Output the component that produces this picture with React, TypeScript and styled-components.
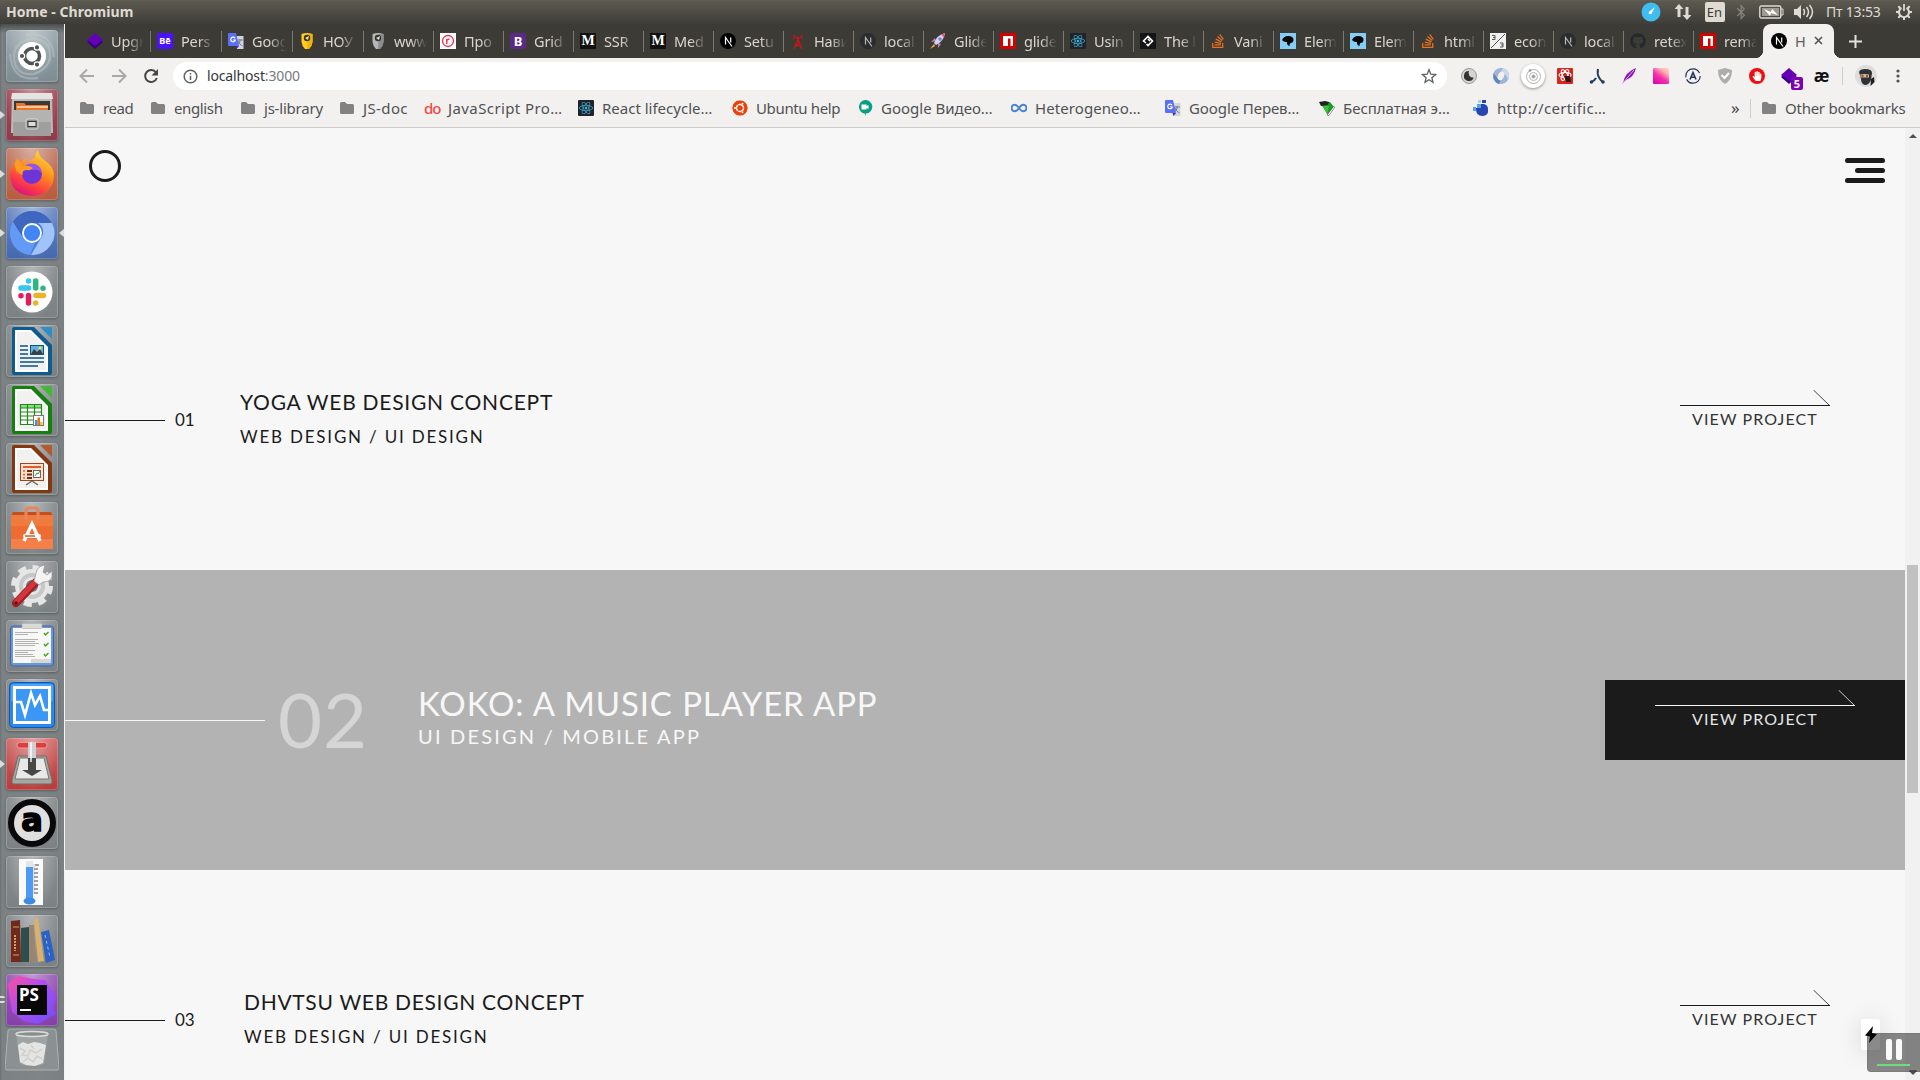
import React from 'react';
import styled, { createGlobalStyle, css } from 'styled-components';
import { FaReact, FaStackOverflow, FaGithub, FaBluetoothB, FaUbuntu, FaHandPaper } from 'react-icons/fa';

const uiFont = '"Noto Sans", "Open Sans", sans-serif';
const pageFont = 'Lato, "Open Sans", sans-serif';

const Global = createGlobalStyle`
  *, *::before, *::after { box-sizing: border-box; }
  body { margin: 0; background: #f7f7f7; overflow: hidden; }
  svg { display: block; flex: none; }
`;

const Desktop = styled.div`
  position: relative;
  display: flex;
  flex-direction: column;
  width: 1920px;
  height: 1080px;
  overflow: hidden;
  font-family: ${uiFont};
`;

/* ---------- system panel ---------- */
const Panel = styled.header`
  display: flex;
  align-items: center;
  flex: none;
  height: 24px;
  padding: 0 8px 0 6px;
  color: #dfdbd2;
  background: linear-gradient(#67644f 0, #5b584f 1px, #5a574f 3px, #3f3e39 23px);
`;
const PanelTitle = styled.div`
  flex: 1;
  font-size: 14px;
  font-weight: 700;
  line-height: 22px;
  letter-spacing: 0.05px;
`;
const Indicators = styled.div`
  display: flex;
  align-items: center;
`;
const Indicator = styled.div<{ $w: number }>`
  display: flex;
  justify-content: center;
  width: ${(p) => p.$w}px;
`;
const Lang = styled.div`
  width: 20px;
  height: 20px;
  border-radius: 2px;
  color: #3c3b37;
  background: #dfdbd2;
  font-size: 13px;
  line-height: 20px;
  text-align: center;
`;
const Clock = styled.div`
  width: 78px;
  padding-left: 8px;
  font-size: 14px;
  line-height: 22px;
  letter-spacing: -0.2px;
  white-space: nowrap;
`;

/* ---------- launcher ---------- */
const Body = styled.div`
  display: flex;
  flex: 1;
  min-height: 0;
`;
const Launcher = styled.nav`
  display: flex;
  flex-direction: column;
  gap: 7px;
  flex: none;
  width: 65px;
  padding: 6px 0 0 6px;
  border-right: 1px solid #f4f4f4;
  background:
    linear-gradient(rgba(30, 32, 33, 0.55), rgba(30, 32, 33, 0) 9px),
    linear-gradient(90deg, #6b7072 0, #7c8284 2px, #808688 60%, #7a8082);
`;
const Tile = styled.div<{ $bg: string; $running?: boolean; $active?: boolean; $pair?: boolean }>`
  position: relative;
  flex: none;
  width: 52px;
  height: 52px;
  border-radius: 4px;
  background: radial-gradient(ellipse at 50% 0, rgba(255, 255, 255, 0.38), rgba(255, 255, 255, 0) 75%), ${(p) => p.$bg};
  box-shadow: inset 0 0 0 1px rgba(255, 255, 255, 0.2), 0 1px 3px rgba(0, 0, 0, 0.3);
  ${(p) => p.$running && css`
    &::before {
      content: '';
      position: absolute;
      left: -6px;
      top: 22px;
      border: 4px solid transparent;
      border-left: 5px solid #dcdcdc;
      border-right: 0;
    }
  `}
  ${(p) => p.$pair && css`
    &::before {
      content: '';
      position: absolute;
      left: -6px;
      top: 22px;
      width: 5px;
      height: 7px;
      border: solid #dcdcdc;
      border-width: 2px 0;
      border-radius: 0 2px 2px 0;
    }
  `}
  ${(p) => p.$active && css`
    &::after {
      content: '';
      position: absolute;
      right: -6px;
      top: 22px;
      border: 4px solid transparent;
      border-right: 5px solid #dcdcdc;
      border-left: 0;
    }
  `}
`;
const TileLetter = styled.div`
  position: absolute;
  inset: 11px 11px 11px 11px;
  padding-left: 2px;
  color: #fff;
  background: #080808;
  font: 700 17px/20px "Noto Sans", sans-serif;
  &::after {
    content: '';
    position: absolute;
    left: 3px;
    bottom: 4px;
    width: 11px;
    height: 2px;
    background: #fff;
  }
`;
const ArchLetter = styled.div`
  position: absolute;
  inset: 0;
  display: flex;
  align-items: center;
  justify-content: center;
  padding-bottom: 7px;
  font: 700 32px/52px "DejaVu Sans", sans-serif;
  -webkit-text-stroke: 1.5px #000;
`;

/* ---------- browser chrome ---------- */
const Browser = styled.main`
  display: flex;
  flex: 1;
  flex-direction: column;
  min-width: 0;
`;
const TabStrip = styled.div`
  display: flex;
  flex: none;
  height: 34px;
  padding-left: 15px;
  background: #3c3b36;
`;
const Tab = styled.div<{ $w: number; $last?: boolean }>`
  display: flex;
  align-items: center;
  gap: 8px;
  flex: none;
  width: ${(p) => p.$w}px;
  height: 21px;
  margin-top: 7px;
  padding: 0 6px 1px;
  border-right: 1px solid ${(p) => (p.$last ? 'transparent' : '#7a7973')};
  &:first-child { padding-left: 7px; }
`;
const TabText = styled.span`
  flex: 1;
  overflow: hidden;
  color: #d9d6ce;
  font-size: 14.5px;
  line-height: 20px;
  letter-spacing: -0.15px;
  white-space: nowrap;
  mask-image: linear-gradient(90deg, #000 50%, transparent 100%);
`;
const ActiveTab = styled.div`
  position: relative;
  display: flex;
  align-items: center;
  gap: 8px;
  flex: none;
  width: 71px;
  margin-left: -1px;
  padding: 0 11px 1px 8px;
  border-radius: 8px 8px 0 0;
  color: #5f6064;
  background: #f2f1f0;
  font-size: 14.5px;
  line-height: 20px;
  &::before, &::after {
    content: '';
    position: absolute;
    bottom: 0;
    width: 8px;
    height: 8px;
  }
  &::before { right: 100%; background: radial-gradient(circle at 0 0, transparent 8px, #f2f1f0 8.5px); }
  &::after { left: 100%; background: radial-gradient(circle at 100% 0, transparent 8px, #f2f1f0 8.5px); }
`;
const ActiveLabel = styled.span`
  flex: 1;
`;
const NewTab = styled.div`
  display: flex;
  align-items: center;
  margin-left: 15px;
`;
const Favicon = styled.span<{ $bg?: string; $fg?: string; $round?: boolean; $size?: number; $serif?: boolean }>`
  display: flex;
  align-items: center;
  justify-content: center;
  flex: none;
  width: 16px;
  height: 16px;
  overflow: hidden;
  border-radius: ${(p) => (p.$round ? '50%' : '1px')};
  color: ${(p) => p.$fg || '#fff'};
  background: ${(p) => p.$bg || 'transparent'};
  font: 700 ${(p) => p.$size || 12}px/16px ${(p) => (p.$serif ? '"Liberation Serif", serif' : uiFont)};
`;
const Toolbar = styled.div`
  display: flex;
  align-items: center;
  flex: none;
  height: 36px;
  padding-left: 13px;
  background: #f2f1f0;
`;
const NavIcons = styled.div`
  display: flex;
  gap: 14px;
  width: 95px;
`;
const Omnibox = styled.div`
  display: flex;
  align-items: center;
  width: 1274px;
  height: 28px;
  padding: 0 10px;
  border-radius: 14px;
  background: #fff;
`;
const Url = styled.div`
  flex: 1;
  padding-left: 9px;
  color: #34363a;
  font-size: 14px;
  line-height: 26px;
  letter-spacing: -0.15px;
  span { color: #77797c; }
`;
const Extensions = styled.div`
  display: flex;
  align-items: center;
  gap: 16px;
  margin-left: 14px;
`;
const ExtSlot = styled.div`
  position: relative;
  display: flex;
  align-items: center;
  justify-content: center;
  width: 16px;
  height: 16px;
`;
const Raised = styled.div`
  display: flex;
  align-items: center;
  justify-content: center;
  flex: none;
  width: 24px;
  height: 24px;
  border-radius: 50%;
  background: #fff;
  box-shadow: 0 1px 3px rgba(0, 0, 0, 0.4);
`;
const Count = styled.span`
  position: absolute;
  left: 10px;
  top: 9px;
  width: 12px;
  height: 13px;
  border-radius: 2px;
  color: #fff;
  background: #8000b8;
  font: 700 11px/13px ${uiFont};
  text-align: center;
`;
const Ligature = styled.span`
  color: #111;
  font: 700 17px/16px ${uiFont};
  letter-spacing: -1px;
`;
const Divider = styled.div`
  width: 1px;
  height: 16px;
  background: #cfcecd;
`;
const Profile = styled.div`
  display: flex;
  align-items: center;
  gap: 19px;
  margin-left: 13px;
`;
const ProfileDivider = styled(Divider)`
  height: 18px;
  margin-right: -7px;
`;
const Bookmarks = styled.div`
  display: flex;
  align-items: center;
  flex: none;
  height: 34px;
  padding: 0 0 5px 14px;
  border-bottom: 1px solid #cbcbca;
  background: #f2f1f0;
`;
const Bookmark = styled.div<{ $w?: number; $track: number }>`
  display: flex;
  align-items: center;
  gap: 8px;
  flex: none;
  width: ${(p) => (p.$w ? p.$w + 'px' : 'auto')};
  color: #505154;
  font-size: 15px;
  line-height: 23px;
  letter-spacing: ${(p) => p.$track}px;
  white-space: nowrap;
`;
const DoMark = styled.span`
  width: 16px;
  color: #f2483f;
  font-size: 15px;
  font-weight: 500;
  letter-spacing: -1px;
`;
const Overflow = styled.div`
  width: 24px;
  margin-left: auto;
  color: #444;
  font-size: 17px;
  line-height: 22px;
`;
const BookmarkDivider = styled(Divider)`
  height: 19px;
  margin: 0 10px 0 -5px;
`;

/* ---------- web page ---------- */
const Viewport = styled.div`
  display: flex;
  flex: 1;
  min-height: 0;
`;
const Page = styled.div`
  flex: 1;
  overflow: hidden;
  background: #f7f7f7;
  color: #1b1b1b;
  font-family: ${pageFont};
`;
const SiteHeader = styled.div`
  display: flex;
  align-items: flex-start;
  justify-content: space-between;
  height: 142px;
  padding: 22px 20px 0 24px;
`;
const Ring = styled.div`
  width: 32px;
  height: 32px;
  border: 3px solid #1b1b1b;
  border-radius: 50%;
`;
const Burger = styled.div`
  display: flex;
  flex-direction: column;
  align-items: flex-end;
  gap: 5px;
  padding-top: 8px;
`;
const BurgerBar = styled.i<{ $w: number }>`
  width: ${(p) => p.$w}px;
  height: 5px;
  border-radius: 2.5px;
  background: #1b1b1b;
`;
const Project = styled.section<{ $hot?: boolean }>`
  display: flex;
  align-items: center;
  height: 300px;
  color: ${(p) => (p.$hot ? '#f7f7f7' : '#1b1b1b')};
  background: ${(p) => (p.$hot ? '#b3b3b3' : 'transparent')};
`;
const Lead = styled.div<{ $hot?: boolean }>`
  width: ${(p) => (p.$hot ? 200 : 100)}px;
  height: 1px;
  margin-top: 1px;
  background: currentColor;
`;
const Index = styled.div<{ $hot?: boolean; $w: number }>`
  width: ${(p) => p.$w}px;
  padding-left: ${(p) => (p.$hot ? 13 : 10)}px;
  padding-bottom: ${(p) => (p.$hot ? 3 : 1)}px;
  font-size: ${(p) => (p.$hot ? 76 : 17)}px;
  line-height: 1;
  letter-spacing: ${(p) => (p.$hot ? 1 : 0)}px;
  opacity: ${(p) => (p.$hot ? 0.5 : 1)};
`;
const Copy = styled.div`
  flex: 1;
`;
const Title = styled.div<{ $hot?: boolean; $track: number }>`
  padding-bottom: ${(p) => (p.$hot ? 1 : 3)}px;
  font-size: ${(p) => (p.$hot ? 33 : 21)}px;
  line-height: 31px;
  letter-spacing: ${(p) => p.$track}px;
`;
const Kind = styled.div<{ $hot?: boolean }>`
  font-size: ${(p) => (p.$hot ? 20 : 17)}px;
  line-height: ${(p) => (p.$hot ? 32 : 34)}px;
  letter-spacing: ${(p) => (p.$hot ? 2.2 : 1.8)}px;
`;
const ViewButton = styled.div<{ $hot?: boolean }>`
  display: flex;
  flex-direction: column;
  align-items: center;
  width: 300px;
  height: 80px;
  padding-top: 10px;
  background: ${(p) => (p.$hot ? '#1b1b1b' : 'transparent')};
  font-size: 16px;
  line-height: 26px;
`;
const ViewLabel = styled.span<{ $hot?: boolean }>`
  color: ${(p) => (p.$hot ? '#e4e4e4' : '#333')};
  letter-spacing: 1.1px;
`;
const ScrollTrack = styled.div`
  display: flex;
  flex-direction: column;
  align-items: center;
  justify-content: space-between;
  width: 15px;
  padding: 6px 0 5px;
  background: #f1f1f1;
`;
const ScrollArrow = styled.i<{ $down?: boolean }>`
  border: 4px solid transparent;
  ${(p) => (p.$down ? 'border-top-color' : 'border-bottom-color')}: #505050;
  ${(p) => (p.$down ? 'border-bottom' : 'border-top')}: 0;
`;
const ScrollThumb = styled.div`
  width: 11px;
  height: 228px;
  margin-top: 149px;
  background: #c1c1c1;
`;

/* ---------- floating widgets ---------- */
const BoltCard = styled.div`
  position: absolute;
  left: 1861px;
  top: 1019px;
  width: 19px;
  height: 31px;
  padding: 7px 0 0 4px;
  border-radius: 2px;
  background: #fff;
  box-shadow: 0 2px 24px rgba(0, 0, 0, 0.14);
`;
const Recorder = styled.div`
  position: absolute;
  left: 1867px;
  top: 1033px;
  display: grid;
  grid-template-columns: 6px 6px;
  gap: 4px;
  align-content: start;
  justify-content: center;
  width: 58px;
  height: 39px;
  padding: 5px 5px 0 0;
  border: 1px solid rgba(0, 0, 0, 0.08);
  border-radius: 4px;
  background: rgba(0, 0, 0, 0.46);
`;
const PauseBar = styled.i`
  height: 21px;
  border-radius: 2px;
  background: #fafafa;
`;
const Progress = styled.i`
  grid-column: 1 / -1;
  justify-self: center;
  width: 33px;
  height: 2px;
  background: #6fdc7c;
`;
const ScrollEnd = styled.i`
  position: absolute;
  left: 1909px;
  top: 1070px;
  border: 4px solid transparent;
  border-top-color: #4a4a4a;
  border-bottom: 0;
`;

/* ---------- drawings ---------- */
const Diamond = () => (
  <svg width="16" height="16" viewBox="0 0 16 16"><path d="M0 9l8-6 8 6-8 7z" fill="#38007a" /><path d="M0 7l8-7 8 7-8 6z" fill="#6200b8" /></svg>
);
const Translate = () => (
  <svg width="16" height="16" viewBox="0 0 16 16">
    <path d="M6 3h9.500v13H9z" fill="#d2d5da" /><path d="M9 7h6M12 6v1.500c0 3-2 4-3 5M10 8c1 3 3 4 4.500 5" stroke="#68788e" strokeWidth="1" fill="none" />
    <path d="M1 0h7l3 13H1a1 1 0 01-1-1V1a1 1 0 011-1z" fill="#5b70f5" /><path d="M7.500 13H11l-2.500 3z" fill="#4220c0" />
    <path d="M7 5.200A2.300 2.300 0 107.300 7H5" stroke="#fff" strokeWidth="1.200" fill="none" />
  </svg>
);
const Bee = ({ gray }: { gray?: boolean }) => (
  <svg width="16" height="16" viewBox="0 0 16 16">
    <path d="M2.500 1Q8-1 13.500 1v8Q13 13 10 16H6Q3 13 2.500 9z" fill={gray ? '#b4b6b8' : '#ffce1f'} />
    <path d="M9 1h4.500v8Q13 13 10 16H8z" fill={gray ? '#8b8d90' : '#f3b307'} />
    <circle cx="8" cy="5" r="3.200" fill="#38351f" /><path d="M6 5l4-2-1 4z" fill={gray ? '#ddd' : '#ffe88a'} />
  </svg>
);
const Rring = () => (
  <svg width="16" height="16" viewBox="0 0 16 16"><rect width="16" height="16" fill="#fff" /><circle cx="8" cy="8" r="5.500" fill="none" stroke="#ef3050" strokeWidth="1.300" /><path d="M6.800 11V6M6.800 7.500Q7.500 6 9.500 6.300" fill="none" stroke="#ef3050" strokeWidth="1.400" /></svg>
);
const Tower = () => (
  <svg width="16" height="16" viewBox="0 0 16 16" fill="none" stroke="#c8171c" strokeWidth="1.200"><path d="M4 16l4-10 4 10M6 11l5 3M7 8l2.500 2-4 3.500" /><path d="M5.800 4.500L3.500 2M10.200 4.500L12.500 2M4.500 6L2.500 5M11.500 6l2-1" /><circle cx="8" cy="5" r="1" fill="#c8171c" /></svg>
);
const Rocket = () => (
  <svg width="16" height="16" viewBox="0 0 16 16"><path d="M6 8l-5 1 4-4zM8 10l0 5 3-4z" fill="#c77cc8" /><path d="M4 10Q7 2 15 0q-1 8-9 12z" fill="#d8d1f0" /><path d="M11 1.500L15 0l-1 4.500z" fill="#ef4f7f" /><circle cx="10" cy="6" r="1.700" fill="#5b8fd6" /><path d="M4 11l-4 5 5-3z" fill="#f2b04a" /></svg>
);
const Npm = () => (
  <svg width="16" height="16" viewBox="0 0 16 16"><path d="M0 0h16v16H0z" fill="#d50000" /><path d="M3 3h10v10h-2.500V5.500H8V13H3z" fill="#fff" /></svg>
);
const ReactMark = () => <Favicon $bg="#20232a" $fg="#40b8dc"><FaReact size={14} /></Favicon>;
const NextMark = ({ dim }: { dim?: boolean }) => (
  <svg width="16" height="16" viewBox="0 0 16 16"><circle cx="8" cy="8" r="8" fill={dim ? '#2b2c2e' : '#000'} /><path d="M5.500 11.500v-7L12 13.500M10.700 4.500v5" stroke={dim ? '#b8b8b8' : '#fff'} strokeWidth="1.200" fill="none" /></svg>
);
const Knot = () => (
  <svg width="16" height="16" viewBox="0 0 16 16"><path d="M0 0h16v16H0z" fill="#151515" /><path d="M6 10L3.500 8 8 3.500 12.500 8 8 12.500 6.500 11M8 6l2 2" stroke="#fff" strokeWidth="1.600" fill="none" /></svg>
);
const Crow = () => (
  <svg width="16" height="16" viewBox="0 0 16 16"><path d="M0 0h16v16H0z" fill="#85cdf5" /><path d="M2 7q2-4 6-4 6 0 5.500 4.500-.5 2.500-3 2.500-1 1-1 3-3-1-2.500-4Q4 9.500 2 7z" fill="#050505" /></svg>
);
const Percent = () => (
  <svg width="16" height="16" viewBox="0 0 16 16"><path d="M0 0h16v16H0z" fill="#f1f1f1" /><path d="M1 15L15 1M2 2.500h3v4H2M3 4.500h2M10 10h3v4h-3M11 12h2" stroke="#555" fill="none" /></svg>
);
const Folder = () => (
  <svg width="16" height="16" viewBox="0 0 16 16"><path d="M1 3.500A1.500 1.500 0 012.500 2H6l2 2h5.500A1.500 1.500 0 0115 5.500v7a1.500 1.500 0 01-1.500 1.500h-11A1.500 1.500 0 011 12.500z" fill="#828282" /></svg>
);
const Hangouts = () => (
  <svg width="16" height="16" viewBox="0 0 16 16"><path d="M8 0a6.800 6.800 0 011 13.600L8 16v-2.300A6.900 6.900 0 018 0z" fill="#0c9d87" /><path d="M4.500 4.500h5V6l2-1v4l-2-1v1.500h-5z" fill="#fff" /></svg>
);
const Loop = () => (
  <svg width="16" height="16" viewBox="0 0 16 16"><path d="M8 8Q5.500 4.500 3.800 4.700a3.200 3.200 0 000 6.500Q6 11.300 8 8t4.200-3.300M8 8q2.500 3.400 4.200 3.200a3.200 3.200 0 000-6.500" fill="none" stroke="#4a82d4" strokeWidth="2" /></svg>
);
const GreenBook = () => (
  <svg width="16" height="16" viewBox="0 0 16 16"><path d="M2 4l9-2 4 5-6 8z" fill="#16a020" /><path d="M3 5l7 1-2 8z" fill="#3cc53c" /><path d="M0 2l6-1 4 1-1 3-7 1z" fill="#222" /><path d="M8 15l2 .5 5.500-8-.7-1.200z" fill="#fff" stroke="#333" strokeWidth=".5" /></svg>
);
const BlueDrop = () => (
  <svg width="16" height="16" viewBox="0 0 16 16"><path d="M9 0h4v3h-4zM3 9q0 7 6.500 7T15 9q0-4-4-5H8v4H3z" fill="#2646b4" /><path d="M4 4h4v4H4zM0 7h3v4H0z" fill="#5ca2e0" /><path d="M5 0h3v3H5z" fill="#a8d1f0" /></svg>
);

const extensions: React.ReactNode[] = [
  <svg width="16" height="16" viewBox="0 0 16 16"><circle cx="8" cy="8" r="7.500" fill="#d4d4d4" stroke="#999" /><path d="M8 3a5 5 0 104.700 6.500A4.500 4.500 0 018 3z" fill="#333" /></svg>,
  <svg width="16" height="16" viewBox="0 0 16 16"><circle cx="8" cy="8" r="8" fill="#9db6d8" /><path d="M10 0a8 8 0 015 12Q14 6 8 4z" fill="#c9d8eb" /><path d="M6 16A8 8 0 011 5q2 5 7 7z" fill="#6386b8" /><ellipse cx="8" cy="8" rx="3" ry="4.500" fill="#f2f1f0" transform="rotate(25 8 8)" /></svg>,
  <Raised><svg width="17" height="17" viewBox="0 0 17 17" fill="none" stroke="#b2b2b2"><circle cx="8.500" cy="8.500" r="7" /><circle cx="8.500" cy="8.500" r="4" /><circle cx="8.500" cy="8.500" r="1.600" fill="#999" /><circle cx="5" cy="2.500" r="1" fill="#777" /></svg></Raised>,
  <Favicon $bg="#d9251d"><svg width="16" height="16" viewBox="0 0 16 16"><g fill="none" stroke="#fff" strokeWidth="1.200"><ellipse cx="8" cy="7" rx="6" ry="2.500" /><ellipse cx="8" cy="7" rx="6" ry="2.500" transform="rotate(60 8 7)" /><ellipse cx="8" cy="7" rx="6" ry="2.500" transform="rotate(120 8 7)" /></g><path d="M7 8l6 0 1 6H9z" fill="#2b1715" /></svg></Favicon>,
  <svg width="16" height="16" viewBox="0 0 16 16" fill="none" stroke="#20415f" strokeWidth="2"><path d="M9 1Q8 6 10 9.500T14 14M7 10Q5.500 13 2 14" /><circle cx="2.500" cy="14" r=".8" /><circle cx="14" cy="14" r=".8" /></svg>,
  <svg width="16" height="16" viewBox="0 0 16 16"><path d="M2 15Q4 4 15 0q-2 9-10 12z" fill="#8d16b5" /><path d="M1 16L13 2" stroke="#e3a9f3" /></svg>,
  <Favicon $bg="linear-gradient(35deg, #d400b8 0, #f72fa8 45%, #ffb3b0 75%, #ffd8c6)" />,
  <svg width="16" height="16" viewBox="0 0 16 16"><circle cx="8" cy="8" r="7.200" fill="none" stroke="#26345c" strokeWidth="1.200" strokeDasharray="19 2 21 3" /><path d="M5 11.500l3-7 3 7M6.200 9.300h3.600" fill="none" stroke="#26345c" strokeWidth="1.600" /></svg>,
  <svg width="16" height="16" viewBox="0 0 16 16"><path d="M8 0l7 2q0 10-7 14Q1 12 1 2z" fill="#adadad" /><path d="M4.500 7l3 3 4.500-5" stroke="#fff" strokeWidth="2" fill="none" /></svg>,
  <Favicon $bg="#f00d0d" $round><FaHandPaper size={10} /></Favicon>,
  <><Diamond /><Count>5</Count></>,
  <Ligature>æ</Ligature>,
];

const tabs: { icon: React.ReactNode; text: string }[] = [
  { icon: <Diamond />, text: 'Upgr' },
  { icon: <Favicon $bg="#4a12fb" $size={9}>Bē</Favicon>, text: 'Pers' },
  { icon: <Translate />, text: 'Goog' },
  { icon: <Bee />, text: 'НОУ' },
  { icon: <Bee gray />, text: 'www' },
  { icon: <Rring />, text: 'Про' },
  { icon: <Favicon $bg="#5b2a86" $size={13}>B</Favicon>, text: 'Grid' },
  { icon: <Favicon $bg="#111" $serif $size={14}>M</Favicon>, text: 'SSR' },
  { icon: <Favicon $bg="#111" $serif $size={14}>M</Favicon>, text: 'Med' },
  { icon: <NextMark />, text: 'Setu' },
  { icon: <Tower />, text: 'Нави' },
  { icon: <NextMark dim />, text: 'local' },
  { icon: <Rocket />, text: 'Glide' },
  { icon: <Npm />, text: 'glide' },
  { icon: <ReactMark />, text: 'Usin' },
  { icon: <Knot />, text: 'The l' },
  { icon: <FaStackOverflow size={16} color="#e9701e" />, text: 'Vani' },
  { icon: <Crow />, text: 'Elem' },
  { icon: <Crow />, text: 'Elem' },
  { icon: <FaStackOverflow size={16} color="#e9701e" />, text: 'html' },
  { icon: <Percent />, text: 'econ' },
  { icon: <NextMark dim />, text: 'local' },
  { icon: <FaGithub size={16} color="#24292e" />, text: 'retex' },
  { icon: <Npm />, text: 'rema' },
];

const bookmarks: { icon: React.ReactNode; text: string; w: number; track: number }[] = [
  { icon: <Folder />, text: 'read', w: 71, track: -0.45 },
  { icon: <Folder />, text: 'english', w: 90, track: -0.37 },
  { icon: <Folder />, text: 'js-library', w: 99, track: -0.22 },
  { icon: <Folder />, text: 'JS-doc', w: 85, track: 0.38 },
  { icon: <DoMark>do</DoMark>, text: 'JavaScript Pro…', w: 154, track: 0.4 },
  { icon: <ReactMark />, text: 'React lifecycle…', w: 154, track: 0 },
  { icon: <Favicon $bg="#fff" $fg="#e8430c" $round><FaUbuntu size={16} /></Favicon>, text: 'Ubuntu help', w: 125, track: -0.36 },
  { icon: <Hangouts />, text: 'Google Видео…', w: 154, track: 0 },
  { icon: <Loop />, text: 'Heterogeneo…', w: 154, track: 0.08 },
  { icon: <Translate />, text: 'Google Перев…', w: 154, track: -0.1 },
  { icon: <GreenBook />, text: 'Бесплатная э…', w: 154, track: -0.04 },
  { icon: <BlueDrop />, text: 'http://certific…', w: 140, track: 0.34 },
];

const Art = ({ children }: { children: React.ReactNode }) => (
  <svg width="52" height="52" viewBox="0 0 52 52">{children}</svg>
);

const OfficeDoc = ({ dark, light, children }: { dark: string; light: string; children: React.ReactNode }) => (
  <Art>
    <path d="M8 2h20l18 18v28a2 2 0 01-2 2H8a2 2 0 01-2-2V4a2 2 0 012-2z" fill={dark} />
    <path d="M34 2h12v12z" fill={light} />
    <path d="M9 5h16l17 17v25H9z" fill="#fff" />
    <path d="M11 7h13l16 16v22H11z" fill="#f1f1f1" />
    {children}
  </Art>
);

const gray = 'linear-gradient(#868b8d, #7c8284)';

const LauncherTiles = () => (
  <Launcher>
    <Tile $bg="linear-gradient(#9aa7ac, #7d8c92)">
      <Art>
        <g fill="none" stroke="#c3cdd0" strokeWidth="2" opacity=".45"><path d="M10 38Q2 12 26 9q20 0 18 22M42 14q8 22-14 30Q8 46 8 26M20 5q26-4 28 22M32 48Q6 52 4 24" /></g>
        <circle cx="26" cy="26" r="14" fill="#fff" />
        <circle cx="26" cy="26" r="7.500" fill="none" stroke="#4d5356" strokeWidth="3.500" />
        <g fill="#4d5356" stroke="#fff" strokeWidth="1.200"><circle cx="16" cy="26" r="2.700" /><circle cx="31" cy="17.400" r="2.700" /><circle cx="31" cy="34.600" r="2.700" /></g>
      </Art>
    </Tile>
    <Tile $bg="linear-gradient(#a4505c, #8e3b49)" $running>
      <Art>
        <path d="M6 4h40v5l1 35H5L6 9z" fill="#bdbdbb" /><path d="M6 4h40l1 6H5z" fill="#e4e4e2" /><path d="M8 12h36v9H8z" fill="#3c3835" />
        <path d="M10 14h8l2 2h22v5H10z" fill="#e8762b" /><path d="M11 18h31" stroke="#ffe2ba" strokeWidth="1.500" /><path d="M7 21h38v26H7z" fill="#9f9f9d" /><path d="M7 21h38v12H7z" fill="#b3b3b1" />
        <rect x="20" y="30" width="12" height="10" rx="2" fill="#8e8e8c" stroke="#d8d8d8" /><rect x="22" y="32.500" width="8" height="5" fill="#ddd" stroke="#333" />
      </Art>
    </Tile>
    <Tile $bg="linear-gradient(#c17e69, #b75c3e)" $running>
      <Art>
        <defs><linearGradient id="fx" x1=".8" y1="0" x2=".3" y2="1"><stop offset="0" stopColor="#ffe33d" /><stop offset=".45" stopColor="#ff8a1e" /><stop offset=".75" stopColor="#ff3d44" /><stop offset="1" stopColor="#d8127c" /></linearGradient></defs>
        <path d="M32 2q1 7 6 10 9 6 10 14 0 21-22 22Q5 47 4 27q0-7 5-13l1-4 4 5q3-4 7-5-2 4 0 7 4-6 8-7 0-5 3-8z" fill="url(#fx)" />
        <circle cx="26" cy="26" r="10" fill="#6d35d8" /><path d="M17 20q4-6 12-4 7 3 6 9-2-4-7-3z" fill="#9156f0" /><path d="M9 14l3-3 5 7q6-1 10 2-3 3-7 2-5 1-3 5Q8 25 9 14z" fill="#ff9c24" />
      </Art>
    </Tile>
    <Tile $bg="linear-gradient(#6b88c4, #4468ad)" $running $active>
      <Art>
        <circle cx="26" cy="26" r="22" fill="#4a7fe0" /><path d="M7 15a22 22 0 0138 0l1 1H26a10 10 0 00-9 14z" fill="#3f67c0" /><path d="M46 16A22 22 0 0125 48l10-17a10 10 0 00-3-15z" fill="#a0c3fa" /><path d="M7 15l10 16q4 6 12 5l-5 12A22 22 0 017 15z" fill="#639af5" />
        <circle cx="26" cy="26" r="9" fill="#4285f4" stroke="#fff" strokeWidth="1.800" />
      </Art>
    </Tile>
    <Tile $bg={gray}>
      <Art>
        <circle cx="26" cy="26" r="20.500" fill="#fff" />
        <g strokeWidth="5.500" strokeLinecap="round">
          <path d="M15 22h7.500M22.500 15v.01" stroke="#36c5f0" /><path d="M29.700 15v7M37 22.200v.01" stroke="#2eb67d" /><path d="M22.500 29.500V37M15 29.700v.01" stroke="#e01e5a" /><path d="M30 29.500h7.500M29.700 37v.01" stroke="#ecb22e" />
        </g>
      </Art>
    </Tile>
    <Tile $bg={gray}>
      <OfficeDoc dark="#0e5c8f" light="#2f8fc4">
        <path d="M14 21h8M14 25h8M14 29h8M14 33h24M14 37h24M14 41h18" stroke="#0b5384" strokeWidth="1.600" /><rect x="24.500" y="20.500" width="13" height="9" fill="#62b2e4" stroke="#0b5384" /><path d="M25 29l3-5 3 3 3-3 3 5z" fill="#3e3e3e" /><circle cx="34" cy="23" r="1.500" fill="#ffe04a" />
      </OfficeDoc>
    </Tile>
    <Tile $bg={gray}>
      <OfficeDoc dark="#15800e" light="#45b736">
        <path d="M14 20h22v21H14z" fill="#fff" /><path d="M14 20h22v4H14z" fill="#8fdc82" /><path d="M14.500 20.500h21v20h-21zM14 24h22M14 28h22M14 32h22M14 36h22M21.500 20v21M28.500 20v21" fill="none" stroke="#1f8a18" strokeWidth="1.200" />
        <rect x="27.500" y="31.500" width="10" height="10" fill="#fff" stroke="#777" /><path d="M29 36h2.500v5H29z" fill="#2b9be0" /><path d="M31.500 33.500H34V41h-2.500z" fill="#e2711d" /><path d="M34 38h2.500v3H34z" fill="#f0c030" />
      </OfficeDoc>
    </Tile>
    <Tile $bg={gray}>
      <OfficeDoc dark="#85380f" light="#b45a2c">
        <rect x="14.500" y="20.500" width="23" height="17" fill="#fbe2d4" stroke="#a5440d" /><path d="M17 24h18" stroke="#d9622a" strokeWidth="2" /><path d="M17 28h2M17 31.500h2M17 35h2" stroke="#d9622a" strokeWidth="1.500" /><path d="M21 28h5M21 31.500h5M21 35h5" stroke="#7a2d05" strokeWidth="2" /><rect x="27.500" y="27.500" width="7" height="7" fill="#fff" stroke="#666" /><path d="M29 33l2-3 1 1 2-3" stroke="#2d9a2d" fill="none" /><path d="M26 38l-6 4M26 38l6 4" stroke="#666" strokeWidth="1.500" />
      </OfficeDoc>
    </Tile>
    <Tile $bg={gray}>
      <Art>
        <path d="M5 14l2-4h38l2 4z" fill="#c24f20" /><path d="M5 13h42v34H5z" fill="#ee6c32" /><path d="M5 13h42v11H5z" fill="#f07b3f" /><path d="M5 37h42v10H5z" fill="#f47f49" />
        <path d="M20 18V9q0-3 3-3h6q3 0 3 3v9" fill="none" stroke="#e8855d" strokeWidth="3" /><path d="M18 39l8-17 8 17" stroke="#fff" strokeWidth="3.500" fill="none" /><rect x="17" y="32" width="18" height="4" rx="2" fill="#fff" /><path d="M19 34h10" stroke="#e8602a" strokeWidth="1.600" />
      </Art>
    </Tile>
    <Tile $bg={gray}>
      <Art>
        <circle cx="26" cy="25" r="17" fill="#e6e6e6" /><circle cx="26" cy="25" r="18.500" fill="none" stroke="#e6e6e6" strokeWidth="5" strokeDasharray="8 6.530" /><circle cx="26" cy="25" r="11" fill="none" stroke="#c6c8c8" strokeWidth="4" /><circle cx="26" cy="25" r="6" fill="#6e7476" />
        <path d="M10 42L30 21" stroke="#a11c22" strokeWidth="8" strokeLinecap="round" /><path d="M10 41L30 20" stroke="#d4343b" strokeWidth="5" strokeLinecap="round" />
        <path d="M28 20l5 4 4-3q7 0 9-5l0-6-5 4-4-3 2-7q-8 1-9 8z" fill="#f4f4f4" stroke="#999" strokeWidth=".8" /><circle cx="10" cy="42" r="1.800" fill="#571014" />
      </Art>
    </Tile>
    <Tile $bg={gray}>
      <Art>
        <rect x="4.500" y="6" width="43" height="40" rx="3" fill="#6d97d4" stroke="#3a65a8" /><path d="M7 8h38v35H7z" fill="#f7f7f5" /><path d="M25 39h20v4H25z" fill="#d8d8d2" /><rect x="16" y="3.500" width="20" height="5" rx="1" fill="#dadad6" stroke="#b0b0ac" strokeWidth=".6" />
        <path d="M9 12.500h23M9 14.500h13M9 19.500h23M9 21.500h20M9 23.500h24M9 25.500h20M9 30.500h20M9 32.500h13M9 34.500h18M9 36.500h20" stroke="#b3b3b3" /><path d="M38 13l1.500 2 3-3M38 24l1.500 2 3-3M38 34l1.500 2 3-3" fill="none" stroke="#48a01c" strokeWidth="1.400" />
      </Art>
    </Tile>
    <Tile $bg={gray}>
      <Art>
        <rect x="3.500" y="3.500" width="45" height="45" rx="4" fill="#2d88ee" stroke="#0d56b5" /><rect x="5" y="5" width="42" height="18" rx="3" fill="#63b8ff" opacity=".6" />
        <path d="M8.500 8.500h35v35h-35z" fill="#3a97f5" stroke="#fff" strokeWidth="3" /><path d="M9 23h6l4 13 6-22 4 12 5-9 4 14h6" fill="none" stroke="#fff" strokeWidth="2.600" />
      </Art>
    </Tile>
    <Tile $bg="linear-gradient(#cf6a68, #b93b3b)" $running>
      <Art>
        <rect x="11" y="4.500" width="30" height="5.500" rx="2.700" fill="#dd3d3f" stroke="#f29a96" /><path d="M12 18h28l6 24v3q0 1-2 1H8q-2 0-2-1v-3z" fill="#a6a7a2" stroke="#6c6d68" /><path d="M14 20h24l5 21H9z" fill="#e8e9e6" stroke="#777" />
        <path d="M22 4h8v28h6L26 38l-10-6h6z" fill="#474747" /><path d="M22 4h8v16h-8z" fill="#d0d0d0" /><path d="M24 4h2v20h-2z" fill="#fff" opacity=".7" />
      </Art>
    </Tile>
    <Tile $bg={gray}>
      <Art><circle cx="26" cy="26" r="21" fill="#dfdfdf" stroke="#090909" strokeWidth="6" /></Art>
      <ArchLetter>a</ArchLetter>
    </Tile>
    <Tile $bg={gray}>
      <Art>
        <path d="M13 3h24v46H13z" fill="#fafafa" /><path d="M20 5h7v38h-7z" fill="#e6e6e6" /><path d="M20 11h7v31h-7z" fill="#4b9bf5" /><ellipse cx="23.500" cy="45" rx="6" ry="3.500" fill="#3d8ae6" /><path d="M29 9h4M28 13h4M28 17h4M28 21h4M28 25h4M28 29h4M28 33h4M28 37h4" stroke="#333" strokeWidth=".9" /><path d="M28 8v30" stroke="#999" strokeWidth=".5" />
      </Art>
    </Tile>
    <Tile $bg={gray}>
      <Art>
        <path d="M5 6l9-1 1 42H5z" fill="#71291e" /><path d="M7 12h6M7 40h6" stroke="#d8a052" /><path d="M9 20v16" stroke="#d8a052" strokeDasharray="2 1" strokeWidth="2" /><path d="M15 13l8-1v35h-8z" fill="#2e4f50" /><path d="M23 10l5 0 2 37h-7z" fill="#9c8474" /><path d="M28 4l4-1 6 43-6 1z" fill="#dcb268" /><path d="M35 17l8-2 6 30-9 3z" fill="#2d62c4" /><path d="M39 20l5 22" stroke="#9dbff0" strokeDasharray="3 3" />
      </Art>
    </Tile>
    <Tile $bg="linear-gradient(#9a5bb8, #8440a8)" $pair>
      <Art>
        <defs><linearGradient id="ps" x1="0" y1="0" x2="1" y2="1"><stop offset="0" stopColor="#ff4f9a" /><stop offset=".45" stopColor="#b14cf5" /><stop offset="1" stopColor="#6b4df8" /></linearGradient></defs>
        <path d="M2 10L12 2l16 3 11 1 11 16-3 12 3 6-18 10L18 47 6 38z" fill="url(#ps)" />
      </Art>
      <TileLetter>PS</TileLetter>
    </Tile>
    <TrashIcon />
  </Launcher>
);

const TrashBox = styled.div`
  margin: -5px 0 0 -1px;
`;
const TrashIcon = () => (
  <TrashBox>
    <svg width="54" height="43" viewBox="0 0 54 43">
      <path d="M5 1h44q2 0 2 2l3 37q0 2-2 2H2q-2 0-2-2L3 3q0-2 2-2z" fill="#8b9192" stroke="#adb2b3" />
      <path d="M11 6l4 30q12 4 24 0l4-30z" fill="#a3a8a8" opacity=".8" /><ellipse cx="27" cy="6" rx="16" ry="2.500" fill="#888d8e" stroke="#dadcdc" strokeWidth="1.500" />
      <path d="M13 17l5-3 5 2 6-2 6 1 6 2-3 18-8 3-9-1-6-3z" fill="#e4e4e2" /><path d="M15 20l5 3-3 4 6 1 2-6 6 3 6-4M18 34l5-4 5 4 4-6 5 3M26 17l3 4" stroke="#cfcfcc" fill="none" strokeWidth="1.500" />
    </svg>
  </TrashBox>
);

const SystemPanel = () => (
  <Panel>
    <PanelTitle>Home - Chromium</PanelTitle>
    <Indicators>
      <Indicator $w={30}><svg width="20" height="20" viewBox="0 0 20 20"><circle cx="10" cy="10" r="9.500" fill="#3fbcf0" /><path d="M14 5l-3.500 6.500-2-2z" fill="#fff" /><circle cx="9.300" cy="10.700" r="1.600" fill="#fff" /></svg></Indicator>
      <Indicator $w={33}><svg width="18" height="18" viewBox="0 0 18 18" fill="#dfdbd2"><path d="M5 1l4.500 5h-3v8h-3V6H.500zM13 17l-4.500-5h3V4h3v8h3z" /></svg></Indicator>
      <Indicator $w={31}><Lang>En</Lang></Indicator>
      <Indicator $w={22}><FaBluetoothB size={16} color="#85827a" /></Indicator>
      <Indicator $w={38}>
        <svg width="25" height="14" viewBox="0 0 25 14"><rect x=".8" y="1" width="21" height="12" rx="1.500" fill="none" stroke="#dfdbd2" strokeWidth="1.400" /><rect x="3" y="3" width="17" height="8" fill="#9d9a91" /><path d="M22 4h2v6h-2" fill="none" stroke="#dfdbd2" /><path d="M5 4l7 3 1-3 6 6-7-2-1 3z" fill="#fff" /></svg>
      </Indicator>
      <Indicator $w={28}>
        <svg width="20" height="16" viewBox="0 0 20 16"><path d="M0 5h3l4-4v14l-4-4H0z" fill="#dfdbd2" /><path d="M9.500 5q2 3 0 6M12.500 3q4 5 0 10M15.500 1q6 7 0 14" stroke="#dfdbd2" strokeWidth="1.500" fill="none" /></svg>
      </Indicator>
      <Clock>Пт 13:53</Clock>
      <Indicator $w={16}>
        <svg width="16" height="16" viewBox="0 0 16 16" fill="none" stroke="#dfdbd2"><path d="M5.500 3.800a5 5 0 105 0" strokeWidth="2" /><path d="M8 0v7" strokeWidth="1.800" /><path d="M8 13v3M0 8h3M13 8h3M2.300 13.700l2-2M13.700 13.700l-2-2M2.300 2.300l2 2M13.700 2.300l-2 2" strokeWidth="2" /></svg>
      </Indicator>
    </Indicators>
  </Panel>
);

const Arrow = ({ width }: { width: number }) => (
  <svg width={width} height="16" viewBox={`0 0 ${width} 16`}>
    <path d={`M0 15.500H${width}`} stroke="currentColor" /><path d={`M${width - 16.500} 0L${width - 1} 15`} stroke="currentColor" strokeWidth=".8" />
  </svg>
);

type Item = { n: string; title: string; kind: string; track: number; gap: number; hot?: boolean };
const projects: Item[] = [
  { n: '01', title: 'YOGA WEB DESIGN CONCEPT', kind: 'WEB DESIGN / UI DESIGN', track: 0.76, gap: 75 },
  { n: '02', title: 'KOKO: A MUSIC PLAYER APP', kind: 'UI DESIGN / MOBILE APP', track: 0.9, gap: 153, hot: true },
  { n: '03', title: 'DHVTSU WEB DESIGN CONCEPT', kind: 'WEB DESIGN / UI DESIGN', track: 0.7, gap: 79 },
];

export default function App() {
  return (
    <Desktop>
      <Global />
      <SystemPanel />
      <Body>
        <LauncherTiles />
        <Browser>
          <TabStrip>
            {tabs.map((t, i) => (
              <Tab key={i} $w={i < 4 ? 71 : 70} $last={i === tabs.length - 1}>{t.icon}<TabText>{t.text}</TabText></Tab>
            ))}
            <ActiveTab>
              <NextMark />
              <ActiveLabel>H</ActiveLabel>
              <svg width="9" height="9" viewBox="0 0 9 9" stroke="#55565a" strokeWidth="1.700"><path d="M1 1l7 7M8 1L1 8" /></svg>
            </ActiveTab>
            <NewTab><svg width="13" height="13" viewBox="0 0 13 13" stroke="#e4e2dc" strokeWidth="2"><path d="M6.500 0v13M0 6.500h13" /></svg></NewTab>
          </TabStrip>
          <Toolbar>
            <NavIcons>
              <svg width="18" height="18" viewBox="0 0 18 18" fill="none" stroke="#a9a8a7" strokeWidth="2"><path d="M16 9H3M9 2.500L2.500 9 9 15.500" /></svg>
              <svg width="18" height="18" viewBox="0 0 18 18" fill="none" stroke="#a9a8a7" strokeWidth="2"><path d="M2 9H15M9 2.500L15.500 9 9 15.500" /></svg>
              <svg width="18" height="18" viewBox="0 0 18 18"><path d="M14 5.500A6 6 0 1014.800 11" fill="none" stroke="#454648" strokeWidth="2" /><path d="M16 2v6.500H9.500z" fill="#454648" /></svg>
            </NavIcons>
            <Omnibox>
              <svg width="15" height="15" viewBox="0 0 15 15" fill="none" stroke="#5f6064" strokeWidth="1.500"><circle cx="7.500" cy="7.500" r="6.300" /><path d="M7.500 6.700V11M7.500 4v1.600" /></svg>
              <Url>localhost<span>:3000</span></Url>
              <svg width="16" height="16" viewBox="0 0 16 16" fill="none" stroke="#5f6064" strokeWidth="1.300"><path d="M8 1.800l1.800 4.400 4.700.4-3.600 3.100 1.100 4.600L8 11.800l-4 2.500 1.100-4.600L1.500 6.600l4.700-.4z" /></svg>
            </Omnibox>
            <Extensions>
              {extensions.map((e, i) => <ExtSlot key={i}>{e}</ExtSlot>)}
            </Extensions>
            <Profile>
              <ProfileDivider />
              <svg width="22" height="22" viewBox="0 0 22 22"><circle cx="11" cy="11" r="11" fill="#dedddc" /><path d="M4 7q1-3 6-3 7 0 7 4l-1 7q-2 5-6 5-4-1-4-6z" fill="#2e3136" /><path d="M5 9.500q5-1 9 0v3H6z" fill="#e3b18a" /><path d="M6.500 11h2M11 11h2" stroke="#111" strokeWidth="1.200" /><path d="M16 14l3-2 .500 5-4 4z" fill="#1d1f22" /></svg>
              <svg width="4" height="16" viewBox="0 0 4 16" fill="#505154"><circle cx="2" cy="3" r="1.600" /><circle cx="2" cy="8" r="1.600" /><circle cx="2" cy="13" r="1.600" /></svg>
            </Profile>
          </Toolbar>
          <Bookmarks>
            {bookmarks.map((b) => <Bookmark key={b.text} $w={b.w} $track={b.track}>{b.icon}{b.text}</Bookmark>)}
            <Overflow>»</Overflow>
            <BookmarkDivider />
            <Bookmark $w={159} $track={-0.25}><Folder />Other bookmarks</Bookmark>
          </Bookmarks>
          <Viewport>
            <Page>
              <SiteHeader>
                <Ring />
                <Burger><BurgerBar $w={40} /><BurgerBar $w={30} /><BurgerBar $w={40} /></Burger>
              </SiteHeader>
              {projects.map((p) => (
                <Project key={p.n} $hot={p.hot}>
                  <Lead $hot={p.hot} />
                  <Index $hot={p.hot} $w={p.gap}>{p.n}</Index>
                  <Copy>
                    <Title $hot={p.hot} $track={p.track}>{p.title}</Title>
                    <Kind $hot={p.hot}>{p.kind}</Kind>
                  </Copy>
                  <ViewButton $hot={p.hot}>
                    <Arrow width={p.hot ? 200 : 150} />
                    <ViewLabel $hot={p.hot}>VIEW PROJECT</ViewLabel>
                  </ViewButton>
                </Project>
              ))}
            </Page>
            <ScrollTrack>
              <ScrollArrow />
              <ScrollThumb />
              <ScrollArrow $down />
            </ScrollTrack>
          </Viewport>
        </Browser>
      </Body>
      <BoltCard><svg width="12" height="17" viewBox="0 0 12 17"><path d="M8 0L0 9.500l5 1L4 17l8-9-5-1z" fill="#080808" /></svg></BoltCard>
      <Recorder><PauseBar /><PauseBar /><Progress /></Recorder>
      <ScrollEnd />
    </Desktop>
  );
}
